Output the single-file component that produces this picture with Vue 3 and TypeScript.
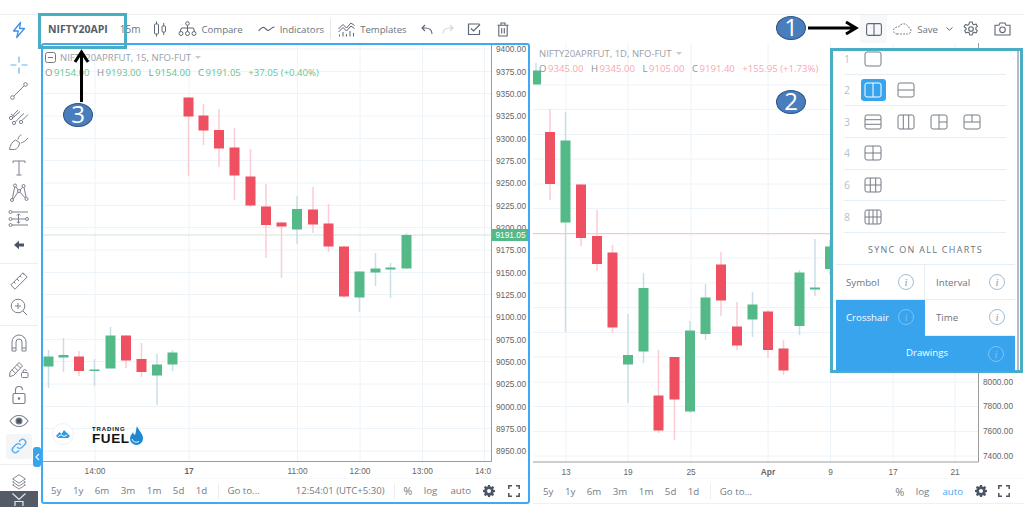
<template>
  <div class="page">
    <div class="top-gap"></div>
    <div class="body">
      <aside class="sidebar">
        <div class="tool-group first">
          <div class="bolt">
            <svg width="18" height="18" viewBox="0 0 18 18" fill="none" stroke="#3f8fe8" stroke-width="1.3" stroke-linejoin="round"><path d="M10.5 1.5 3.5 10h4.8l-1.6 6.5L14.5 7.5H9.6l.9-6Z" /></svg>
          </div>
          <div class="tool">
            <svg width="20" height="20" viewBox="0 0 20 20" fill="none" stroke="#62b5f4" stroke-width="1.2"><path d="M1.5 10H7.5M12.5 10H18.5M10 1.5V7.5M10 12.5V18.5" /></svg>
          </div>
          <div class="tool">
            <svg width="20" height="20" viewBox="0 0 20 20" fill="none" stroke="#7a818c" stroke-width="1"><circle cx="3.5" cy="16.5" r="1.8" /><circle cx="16.5" cy="3.5" r="1.8" /><path d="M4.8 15.2 15.2 4.8" /></svg>
          </div>
          <div class="tool">
            <svg width="22" height="20" viewBox="0 0 22 20" fill="none" stroke="#7a818c" stroke-width="1"><circle cx="3" cy="12" r="1.6" /><circle cx="6" cy="17" r="1.6" /><circle cx="13" cy="16" r="1.6" /><path d="M4 10.5 10 4M4.5 12 12 5.5M7.5 16 13 10l3-2.5M14 14.5 20 8.5M3 8l4 3" /></svg>
          </div>
          <div class="tool">
            <svg width="22" height="20" viewBox="0 0 22 20" fill="none" stroke="#7a818c" stroke-width="1" stroke-linejoin="round"><path d="M1.5 17.5c.5-4 2.5-8 6-9.5l4 2.5c0 3.5-2 6.5-5 7H1.5Z" /><path d="M10 7.5c.5-3 2-4.5 3.5-4.5M13 11c2-.5 4.5-2 7-5" /></svg>
          </div>
          <div class="tool">
            <svg width="18" height="18" viewBox="0 0 18 18" fill="none" stroke="#7a818c" stroke-width="1"><path d="M3 2H15M9 2V16M6.5 16H11.5M3 2V4M15 2V4" /></svg>
          </div>
          <div class="tool">
            <svg width="20" height="20" viewBox="0 0 20 20" fill="none" stroke="#7a818c" stroke-width="1"><circle cx="3" cy="17" r="1.5" /><circle cx="6" cy="2.5" r="1.5" /><circle cx="10" cy="8" r="1.5" /><circle cx="14.5" cy="3" r="1.5" /><circle cx="17.5" cy="16" r="1.5" /><path d="M3.4 15.5 5.7 4M7 4 9 6.8M11.2 7 13.6 4.2M15 4.5 17.2 14.5M4.3 16 9 9M11 9.2 16.3 15" /></svg>
          </div>
          <div class="tool">
            <svg width="22" height="20" viewBox="0 0 22 20" fill="none" stroke="#7a818c" stroke-width="1"><circle cx="2.5" cy="3" r="1.5" /><circle cx="2.5" cy="10" r="1.5" /><circle cx="19" cy="10" r="1.5" /><circle cx="2.5" cy="16" r="1.5" /><path d="M4 3H20M4 10H17.5M4 16H20M10.5 5V14M8.8 6.5 10.5 4.8 12.2 6.5M8.8 12.5 10.5 14.2 12.2 12.5" /></svg>
          </div>
          <div class="tool">
            <svg width="12" height="12" viewBox="0 0 12 12"><path d="M1 6 6 1.8V4.5H11V7.5H6V10.2Z" fill="#4b5563" /></svg>
          </div>
        </div>
        <div class="tool-group">
          <div class="tool">
            <svg width="20" height="20" viewBox="0 0 20 20" fill="none" stroke="#7a818c" stroke-width="1"><path d="M1.8 14 14 1.8 18.2 6 6 18.2ZM5 11l1.5 1.5M8 8l2 2M11 5l1.5 1.5M14 2.5l1.5 1.5" /></svg>
          </div>
          <div class="tool">
            <svg width="20" height="20" viewBox="0 0 20 20" fill="none" stroke="#7a818c" stroke-width="1"><circle cx="9" cy="9" r="6.8" /><path d="M6 9H12M9 6V12M14 14 18 18" /></svg>
          </div>
        </div>
        <div class="tool-group">
          <div class="tool">
            <svg width="18" height="20" viewBox="0 0 18 20" fill="none" stroke="#7a818c" stroke-width="1"><path d="M2 17V8a7 7 0 0 1 14 0v9H12V8a3 3 0 0 0-6 0v9ZM2 14H6M12 14H16" /></svg>
          </div>
          <div class="tool">
            <svg width="22" height="20" viewBox="0 0 22 20" fill="none" stroke="#7a818c" stroke-width="1"><path d="M2 13 11 3.5l3.5 3.5L5.5 16.5l-4 1ZM4 10.8l3.5 3.5M6.500 8.2 10 11.7M9 5.5l3.5 3.5" /><rect x="13.5" y="13.5" width="6.5" height="5" rx="1" /><path d="M15 13.5V12a1.8 1.8 0 0 1 3.5 0" /></svg>
          </div>
          <div class="tool">
            <svg width="16" height="20" viewBox="0 0 16 20" fill="none" stroke="#7a818c" stroke-width="1.1"><rect x="2" y="8.5" width="12" height="10" rx="1.2" /><path d="M4.5 8.5V5a3.5 3.5 0 0 1 7 0" /><circle cx="8" cy="13.5" r=".8" fill="#4b5563" /></svg>
          </div>
          <div class="tool">
            <svg width="20" height="14" viewBox="0 0 20 14" fill="none" stroke="#7a818c" stroke-width="1.1"><path d="M1 7c2.500-3.800 5.500-5.500 9-5.500s6.500 1.700 9 5.500c-2.500 3.800-5.500 5.500-9 5.500S3.500 10.800 1 7Z" /><circle cx="10" cy="7" r="3" fill="#4b5563" /></svg>
          </div>
          <div class="tool link-tool">
            <svg width="18" height="18" viewBox="0 0 18 18" fill="none" stroke="#55aef2" stroke-width="1.4" stroke-linecap="round"><path d="M7.5 10.5a3 3 0 0 0 4.3 0l3-3a3 3 0 0 0-4.300-4.300L9.400 4.300" /><path d="M10.5 7.5a3 3 0 0 0-4.300 0l-3 3a3 3 0 0 0 4.300 4.300l1.100-1.100" /></svg>
          </div>
        </div>
        <div class="tool-group last">
          <div class="tool">
            <svg width="16" height="17" viewBox="0 0 18 20" fill="none" stroke="#7a818c" stroke-width="1.1" stroke-linejoin="round"><path d="M9 2 16.5 7 9 12 1.5 7ZM3 9.5 1.5 10.5 9 15.5 16.5 10.5 15 9.5M3 13 1.5 14 9 19 16.5 14 15 13" /></svg>
          </div>
        </div>
        <div class="hide-tab">
          <svg width="16" height="16" viewBox="0 0 16 16" fill="none" stroke="#e5e7eb" stroke-width="1.2"><path d="M1.5 2.5 8 8.5 14.5 2.5M4 15V10.5H12V15" /></svg>
        </div>
      </aside>

      <div class="content">
        <header class="topbar">
          <span class="symbol">NIFTY20API</span>
          <span class="bar-text interval">15m</span>
          <svg class="candles-icon" width="14" height="18" viewBox="0 0 14 18" fill="none" stroke="#5f6772" stroke-width="1"><rect x="1.5" y="4" width="4" height="10" rx=".8" /><path d="M3.5 1.5V4M3.5 14V16.5" /><rect x="9" y="6" width="3.5" height="6" rx=".8" /><path d="M10.7 3V6M10.7 12V15" /></svg>
          <svg class="compare-icon" width="19" height="18" viewBox="0 0 19 18" fill="none" stroke="#5f6772" stroke-width="1"><circle cx="9.5" cy="3.5" r="1.8" /><circle cx="3" cy="13.5" r="2" /><circle cx="9.5" cy="13.5" r="2" /><circle cx="16" cy="13.5" r="2" /><path d="M9.5 5.3V8H3.5L2 11.5M9.5 8V11.5M9.5 8H15.5L16.5 11.5" /></svg>
          <span class="bar-text compare-label">Compare</span>
          <svg class="line-icon" width="17" height="12" viewBox="0 0 17 12" fill="none" stroke="#5f6772" stroke-width="1.1"><path d="M.5 8C3 5 4.5 4 6 4.5S9 8 10.5 7.5 14 4 16.5 4" /></svg>
          <span class="bar-text">Indicators</span>
          <i class="bar-sep"></i>
          <svg class="templates-icon" width="17" height="18" viewBox="0 0 17 18" fill="none" stroke="#5f6772" stroke-width="1"><path d="M.5 9 5 4.5 8.5 8 13 3l3.5 2.5M.5 12 5 7.5 8.5 11 13 6l3.5 2.5M1.5 16.5V14.5M5 16.5V12M8.5 16.5V14M12 16.5V11M15.5 16.5V13" /></svg>
          <span class="bar-text">Templates</span>
          <svg class="undo" width="12" height="11" viewBox="0 0 12 11" fill="none" stroke="#5f6772" stroke-width="1.1"><path d="M11 10C11 6 8.5 4 4 4H1M4 1 1 4l3 3" /></svg>
          <svg class="redo" width="12" height="11" viewBox="0 0 12 11" fill="none" stroke="#d2d6db" stroke-width="1.1"><path d="M1 10C1 6 3.5 4 8 4h3M8 1l3 3-3 3" /></svg>
          <svg class="check" width="14" height="14" viewBox="0 0 14 14" fill="none" stroke="#5f6772" stroke-width="1.2"><path d="M12.5 2H1.5V12.5H12.5V8M4 6.5 6.5 9 13 2.5" /></svg>
          <svg class="trash" width="12" height="15" viewBox="0 0 12 15" fill="none" stroke="#5f6772" stroke-width="1.1"><path d="M.5 3.2H11.5M4 3V1H8V3M1.8 3.2V14H10.2V3.2M4.7 6V11.5M7.3 6V11.5" /></svg>
          <div class="layout-btn">
            <svg width="16" height="13" viewBox="0 0 16 13" fill="none" stroke="#5f6772" stroke-width="1.1"><rect x=".6" y=".6" width="14.8" height="11.8" rx="1.8" /><path d="M8 .6V12.4" /></svg>
          </div>
          <svg class="cloud" width="19" height="12" viewBox="0 0 19 12" fill="none" stroke="#5f6772" stroke-width=".9" stroke-dasharray="1.8 1.3"><path d="M4 11H14.5a3.5 3.5 0 0 0 .8-6.900C14.5 2 12.5 .8 10.5 .8 8.5 .8 6.5 2 6 3.800 3 3.500 .6 5.300 .6 7.500S2 11 4 11Z" /></svg>
          <span class="bar-text save">Save</span>
          <svg class="chev" width="7" height="4" viewBox="0 0 7 4" fill="none" stroke="#5f6772" stroke-width="1"><path d="M.5 .5 3.5 3.2 6.5 .5" /></svg>
          <svg class="gear-top" width="16" height="16" viewBox="0 0 16 16" fill="none" stroke="#5f6772" stroke-width="1.1" stroke-linejoin="round"><path d="M6.7 1h2.600l.4 2 1.500.800 1.900-.700 1.300 2.300-1.500 1.300v1.600l1.500 1.300-1.300 2.300-1.900-.700-1.500.800-.4 2H6.700l-.4-2-1.500-.800-1.900.700-1.300-2.300 1.500-1.300V7.100L1.100 5.800l1.300-2.300 1.900.700 1.500-.800Z" /><circle cx="8" cy="8" r="2.3" /></svg>
          <svg class="camera" width="17" height="14" viewBox="0 0 17 14" fill="none" stroke="#5f6772" stroke-width="1.1"><path d="M1 3.2H5L6 1H11L12 3.2H16V13H1Z" /><circle cx="8.5" cy="7.8" r="2.8" /></svg>
        </header>

        <main class="charts">
          <section class="pane left-pane">
            <svg class="plot" width="485" height="434" viewBox="43 45 485 434">
              <path v-for="y in leftRows" :key="y" :d="`M43 ${y}H491`" class="grid" />
              <path v-for="x in leftCols" :key="x" :d="`M${x} 45V461`" class="grid" />
              <path d="M43 235H491" class="last-green" />
              <g v-for="c in leftCandles" :key="c[0]">
                <path :d="`M${c[0]} ${c[1]}V${c[2]}`" :class="c[5] ? 'wick-up' : 'wick-down'" />
                <rect :x="c[0] - 5" :y="c[3]" width="10" :height="c[4] - c[3]" :class="c[5] ? 'body-up' : 'body-down'" />
              </g>
              <path d="M491.5 45V461.5H43" class="axis" />
              <path d="M43 479H528" class="grid" />
              <text v-for="(p, i) in leftPrices" :key="p" x="496" :y="leftRows[i] + 3" class="tick">{{ p }}</text>
              <rect x="492" y="229" width="36" height="12" fill="#53b987" />
              <text x="495.5" y="238" class="tag">9191.05</text>
              <text v-for="t in leftTimes" :key="t.l" :x="t.x" y="474" text-anchor="middle" :class="t.b ? 'tick bold' : 'tick'">{{ t.l }}</text>
            </svg>
            <div class="legend left-legend">
              <div class="legend-title">
                <svg width="11" height="11" viewBox="0 0 11 11" fill="none" stroke="#777" stroke-width="1"><rect x=".5" y=".5" width="10" height="10" rx="2" /><path d="M3 5.5H8" /></svg>
                <span>NIFTY20APRFUT, 15, NFO-FUT</span><i class="caret"></i>
              </div>
              <div class="legend-vals up">
                <span><b>O</b>9154.00</span><span><b>H</b>9193.00</span><span><b>L</b>9154.00</span><span><b>C</b>9191.05</span><span>+37.05 (+0.40%)</span>
              </div>
            </div>
            <div class="watermark">
              <div class="cloud-badge">
                <svg width="16" height="10" viewBox="0 0 16 10"><path d="M1 7 4.5 3 6.5 5 9 1l3 3 3 3-2 2H3Z" fill="#2f9be0" /><path d="M3 7.5 6 5.800 9 7.500 12 6" stroke="#fff" fill="none" stroke-width="1" /></svg>
              </div>
              <div class="fuel">
                <span class="fuel-small">TRADING</span>
                <span class="fuel-big">FUEL</span>
              </div>
              <svg width="13" height="19" viewBox="0 0 13 19"><path d="M7 0C8 4 13 7 13 12.5A6.500 6.500 0 0 1 0 12.500C0 9.500 2 8.500 3 6 3.500 8 4 8.500 5 9 6 6 6 3 7 0Z" fill="#1e88d0" /><path d="M2 13c1 3 4 4 7 2.500" stroke="#fff" fill="none" stroke-width="1" /></svg>
            </div>
            <footer class="range-bar">
              <span v-for="r in ranges" :key="r">{{ r }}</span>
              <i class="range-sep"></i>
              <span class="goto">Go to...</span>
              <span class="clock">12:54:01 (UTC+5:30)</span>
              <i class="range-sep"></i>
              <span class="pct">%</span>
              <span>log</span>
              <span class="auto">auto</span>
              <svg class="gear" width="12" height="12" viewBox="0 0 12 12"><path fill-rule="evenodd" fill="#4b5563" d="M5 0h2l.3 1.600 1 .4L9.700 1.100l1.400 1.400-.9 1.400.4 1L12 5v2l-1.400.300-.4 1 .9 1.400-1.400 1.400-1.400-.9-1 .4L7 12H5l-.3-1.400-1-.4-1.400.9L.9 9.700l.9-1.400-.4-1L0 7V5l1.400-.300.4-1-.9-1.400L2.300 .9l1.400.9 1-.4ZM6 4a2 2 0 1 0 0 4 2 2 0 0 0 0-4Z" /></svg>
              <svg class="expand" width="12" height="12" viewBox="0 0 12 12" fill="none" stroke="#4b5563" stroke-width="1.5"><path d="M.8 4V.8H4M8 .8h3.200V4M11.200 8v3.200H8M4 11.200H.8V8" /></svg>
            </footer>
          </section>

          <section class="pane right-pane">
            <svg class="plot" width="491" height="436" viewBox="533 43 491 436">
              <path v-for="y in rightRows" :key="y" :d="`M533 ${y}H978`" class="grid" />
              <path v-for="x in rightCols" :key="x" :d="`M${x} 43V462`" class="grid" />
              <path d="M533 233.7H978" class="last-red" />
              <g v-for="c in rightCandles" :key="c[0]">
                <path :d="`M${c[0]} ${c[1]}V${c[2]}`" :class="c[5] ? 'wick-up' : 'wick-down'" />
                <rect :x="c[0] - 5" :y="c[3]" width="10" :height="c[4] - c[3]" :class="c[5] ? 'body-up' : 'body-down'" />
              </g>
              <path d="M978.5 43V462H533" class="axis" />
              <text v-for="p in rightPrices" :key="p.l" x="983" :y="p.y + 3" class="tick">{{ p.l }}</text>
              <text v-for="t in rightTimes" :key="t.l" :x="t.x" y="475" text-anchor="middle" :class="t.b ? 'tick bold' : 'tick'">{{ t.l }}</text>
              <path d="M533 479H1024" class="grid" />
            </svg>
            <div class="legend right-legend">
              <div class="legend-title"><span>NIFTY20APRFUT, 1D, NFO-FUT</span><i class="caret"></i></div>
              <div class="legend-vals down">
                <span><b>O</b>9345.00</span><span><b>H</b>9345.00</span><span><b>L</b>9105.00</span><span><b>C</b>9191.40</span><span>+155.95 (+1.73%)</span>
              </div>
            </div>
            <footer class="range-bar">
              <span v-for="r in ranges" :key="r">{{ r }}</span>
              <i class="range-sep"></i>
              <span class="goto">Go to...</span>
              <span class="pct push">%</span>
              <span>log</span>
              <span class="auto on">auto</span>
              <svg class="gear" width="12" height="12" viewBox="0 0 12 12"><path fill-rule="evenodd" fill="#4b5563" d="M5 0h2l.3 1.600 1 .4L9.700 1.100l1.400 1.400-.9 1.400.4 1L12 5v2l-1.400.300-.4 1 .9 1.400-1.400 1.400-1.400-.9-1 .4L7 12H5l-.3-1.400-1-.4-1.400.9L.9 9.700l.9-1.400-.4-1L0 7V5l1.400-.300.4-1-.9-1.400L2.300 .9l1.400.9 1-.4ZM6 4a2 2 0 1 0 0 4 2 2 0 0 0 0-4Z" /></svg>
              <svg class="expand" width="12" height="12" viewBox="0 0 12 12" fill="none" stroke="#4b5563" stroke-width="1.5"><path d="M.8 4V.8H4M8 .8h3.200V4M11.200 8v3.200H8M4 11.200H.8V8" /></svg>
            </footer>
          </section>
        </main>
      </div>
    </div>

    <div class="handle">
      <svg width="5" height="8" viewBox="0 0 5 8" fill="none" stroke="#fff" stroke-width="1.1"><path d="M4 1 1 4l3 3" /></svg>
    </div>

    <div class="layout-menu">
      <div v-for="row in layoutRows" :key="row.n" class="layout-row">
        <span class="row-num">{{ row.n }}</span>
        <span v-for="(d, i) in row.icons" :key="i" :class="['layout-icon', { active: row.n === 2 && i === 0 }]">
          <svg width="18" height="16" viewBox="0 0 18 16" fill="none" stroke="currentColor" stroke-width="1"><rect x="1" y="1" width="16" height="14" rx="2" /><path :d="d" /></svg>
        </span>
      </div>
      <div class="sync-title">SYNC ON ALL CHARTS</div>
      <div class="sync-grid">
        <div v-for="s in syncItems" :key="s.label" :class="['sync-cell', { on: s.on, wide: s.wide }]">
          <span class="sync-label">{{ s.label }}</span>
          <span class="info">i</span>
        </div>
      </div>
    </div>

    <div class="callout symbol-box"></div>
    <svg class="arrows" width="1024" height="507" viewBox="0 0 1024 507" fill="none" stroke="#000" stroke-width="3">
      <path d="M808 28H855M846 22 856 28 846 34" />
      <path d="M81.5 102V54M75 62 81.5 52 88 62" />
    </svg>
    <div class="badge b1">1</div>
    <div class="badge b2">2</div>
    <div class="badge b3">3</div>
  </div>
</template>

<script setup lang="ts">
// x, wick top, wick bottom, body top, body bottom, rising
type Candle = [number, number, number, number, number, boolean];

const leftCandles: Candle[] = [
  [48.5, 350, 388, 356.5, 366.5, true],
  [63.5, 338, 372, 355, 357.5, true],
  [79, 351, 376, 356.5, 371, false],
  [94.5, 359, 386, 369.5, 371, true],
  [110.5, 327, 368, 335.5, 368.5, true],
  [126, 335, 368, 335.5, 360.5, false],
  [141.5, 343, 377, 359, 372, false],
  [157, 354, 405, 364.5, 375.5, true],
  [172.5, 350, 371, 352.5, 364.5, true],
  [188.5, 97, 176, 97.5, 116.5, false],
  [203.5, 104, 145, 115.5, 130.5, false],
  [219, 109, 167, 130, 148.5, false],
  [234.5, 128, 200, 147.5, 175.5, false],
  [250.5, 149, 207, 176.5, 205.5, false],
  [266, 184, 258, 206.5, 225, false],
  [281.5, 222, 278, 222.5, 226.5, false],
  [297, 196, 244, 209, 229.5, true],
  [313, 187, 233, 209.5, 224.5, false],
  [328.5, 204, 252, 223.5, 246.5, false],
  [344, 246, 298, 246.5, 296.5, false],
  [359.5, 271, 312, 271.5, 297.5, true],
  [375.5, 253, 286, 268.5, 272.5, true],
  [390.5, 263, 298, 267.5, 269.5, true],
  [406.5, 233, 269, 235, 268.5, true],
];

const rightCandles: Candle[] = [
  [536, 63, 84, 70.5, 84.5, true],
  [550, 109, 200, 132, 184, false],
  [565.5, 112, 332, 140.5, 222.5, true],
  [581, 184, 246, 184.5, 238, false],
  [597, 210, 271, 236, 264, false],
  [612.5, 245, 333, 252.5, 327.5, false],
  [628, 314, 403, 355, 364.5, true],
  [643.5, 273, 363, 288, 351.5, true],
  [658.5, 350, 433, 395.5, 430.5, false],
  [674.5, 357, 440, 357, 399.5, false],
  [690, 321, 413, 330.5, 411.5, true],
  [705.5, 284, 340, 297.5, 334, true],
  [721, 252, 316, 264.5, 300.5, false],
  [737, 302, 350, 326.5, 345.5, false],
  [752.5, 292, 337, 304.5, 319.5, true],
  [768, 310, 358, 311.5, 350, false],
  [783.5, 340, 375, 348.5, 370.5, false],
  [799.5, 270, 335, 272.5, 326, true],
  [815, 239, 296, 287.5, 289.5, true],
  [830, 240, 275, 246.5, 269, true],
];

const leftPrices: string[] = [];
const leftRows: number[] = [];
for (let i = 0; i <= 18; i++) {
  leftPrices.push((9400 - i * 25).toFixed(2));
  leftRows.push(Math.round((49 + i * 22.33) * 2) / 2);
}
const leftCols = [95, 189, 297.5, 360, 422.5, 484.5];
const leftTimes = [
  { l: "14:00", x: 95, b: false },
  { l: "17", x: 189, b: true },
  { l: "11:00", x: 297.5, b: false },
  { l: "12:00", x: 360, b: false },
  { l: "13:00", x: 422.5, b: false },
  { l: "14:0", x: 483, b: false },
];

const rightRows: number[] = [];
for (let i = 0; i <= 15; i++) rightRows.push(Math.round((84.75 + i * 24.75) * 2) / 2);
const rightCols = [566, 628, 691, 768, 830.5, 893, 955];
const rightTimes = [
  { l: "13", x: 566, b: false },
  { l: "19", x: 628, b: false },
  { l: "25", x: 691, b: false },
  { l: "Apr", x: 768, b: true },
  { l: "9", x: 830.5, b: false },
  { l: "17", x: 893, b: false },
  { l: "21", x: 955, b: false },
];
const rightPrices = [
  { l: "8000.00", y: 381.5 },
  { l: "7800.00", y: 406 },
  { l: "7600.00", y: 430.5 },
  { l: "7400.00", y: 456 },
];

const ranges = ["5y", "1y", "6m", "3m", "1m", "5d", "1d"];

const layoutRows = [
  { n: 1, icons: [""] },
  { n: 2, icons: ["M9 1V15", "M1 8H17"] },
  { n: 3, icons: ["M1 5.7H17M1 10.3H17", "M6.3 1V15M11.7 1V15", "M9 1V15M9 8H17", "M1 8H17M9 1V8"] },
  { n: 4, icons: ["M9 1V15M1 8H17"] },
  { n: 6, icons: ["M6.3 1V15M11.7 1V15M1 8H17"] },
  { n: 8, icons: ["M5 1V15M9 1V15M13 1V15M1 8H17"] },
];

const syncItems = [
  { label: "Symbol", on: false, wide: false },
  { label: "Interval", on: false, wide: false },
  { label: "Crosshair", on: true, wide: false },
  { label: "Time", on: false, wide: false },
  { label: "Drawings", on: true, wide: true },
];
</script>

<style>
html,
body {
  margin: 0;
  background: #fff;
}
</style>

<style scoped>
.page {
  position: relative;
  width: 1024px;
  height: 507px;
  overflow: hidden;
  background: #fff;
  font-family: "Open Sans", "Liberation Sans", sans-serif;
  color: #6b7480;
}
.top-gap {
  height: 14px;
  border-bottom: 1px solid #eceef1;
}
.body {
  display: flex;
  height: 492px;
}
.sidebar {
  position: relative;
  width: 38px;
  flex: none;
}
.tool-group {
  padding: 5px 0;
  border-top: 1px solid #eceef1;
}
.tool-group.first {
  padding: 0 0 5px;
  border-top: 0;
}
.tool-group.last {
  padding-top: 3px;
}
.bolt {
  height: 37px;
  display: flex;
  align-items: flex-start;
  justify-content: center;
  padding-top: 6px;
  box-sizing: border-box;
}
.tool {
  height: 25.7px;
  display: flex;
  align-items: center;
  justify-content: center;
}
.link-tool {
  margin: 0 6px;
  background: #f3f5f7;
  border-radius: 3px;
}
.hide-tab {
  position: absolute;
  left: 0;
  bottom: 0;
  width: 38px;
  height: 16px;
  background: #555b66;
  display: flex;
  justify-content: center;
}
.content {
  flex: 1;
  min-width: 0;
}
.topbar {
  height: 28px;
  display: flex;
  align-items: center;
  font-size: 9.6px;
  white-space: nowrap;
}
.symbol {
  margin-left: 10px;
  font-size: 10.5px;
  font-weight: 700;
  color: #555d68;
}
.bar-text {
  margin-left: 5px;
}
.interval {
  margin-left: 12px;
  font-size: 10px;
}
.candles-icon {
  margin-left: 13px;
}
.compare-icon {
  margin-left: 11px;
}
.compare-label {
  margin-left: 4px;
}
.line-icon {
  margin-left: 15px;
}
.bar-sep {
  width: 1px;
  height: 20px;
  background: #e6e8eb;
  margin: 0 7px 0 6px;
}
.undo {
  margin-left: 14px;
}
.redo {
  margin-left: 9px;
}
.check {
  margin-left: 13px;
}
.trash {
  margin-left: 16px;
}
.layout-btn {
  margin-left: auto;
  width: 27px;
  height: 28px;
  background: #f7f8fa;
  display: flex;
  align-items: center;
  justify-content: center;
}
.cloud {
  margin-left: 6px;
}
.chev {
  margin-left: 8px;
}
.gear-top {
  margin-left: 10px;
}
.camera {
  margin: 0 13px 0 15px;
}
.charts {
  display: flex;
  height: 461px;
  padding-left: 3px;
}
.pane {
  position: relative;
  box-sizing: border-box;
  height: 461px;
  flex: none;
}
.left-pane {
  width: 489px;
  border: 2px solid #3fa9f5;
  border-radius: 3px;
}
.right-pane {
  width: 491px;
  margin-left: 3px;
  border-bottom: 1px solid #eef1f4;
}
.plot {
  display: block;
}
.grid {
  stroke: #edf4f9;
  stroke-width: 1;
  fill: none;
}
.axis {
  stroke: #9b9b9b;
  stroke-width: 1;
  fill: none;
}
.last-green {
  stroke: #b5e3cc;
  stroke-dasharray: 1.5 0.5;
}
.last-red {
  stroke: #f9c6cd;
  stroke-width: 1.2;
}
.wick-up {
  stroke: #c8e0e5;
  stroke-width: 1.5;
}
.wick-down {
  stroke: #fbccd3;
  stroke-width: 1.5;
}
.body-up {
  fill: #53b987;
}
.body-down {
  fill: #ee4f61;
}
.tick {
  font-family: "Liberation Sans", sans-serif;
  font-size: 8.3px;
  fill: #666;
}
.tick.bold {
  font-weight: 700;
}
.tag {
  font-family: "Liberation Sans", sans-serif;
  font-size: 8.3px;
  fill: #fff;
}
.legend {
  position: absolute;
  font-size: 9.5px;
  color: #9aa0a8;
}
.left-legend {
  left: 2px;
  top: 5px;
}
.right-legend {
  left: 6px;
  top: 3px;
}
.legend-title {
  display: flex;
  align-items: center;
  gap: 4px;
  height: 15px;
  white-space: nowrap;
}
.caret {
  width: 0;
  height: 0;
  border: 3px solid transparent;
  border-top: 3px solid #c5c9ce;
  margin-top: 3px;
}
.legend-vals {
  display: flex;
  gap: 7.5px;
  height: 15px;
  align-items: center;
  white-space: nowrap;
  font-size: 9.6px;
}
.legend-vals b {
  font-weight: 400;
  color: #8d939b;
  margin-right: 1.5px;
}
.legend-vals.up {
  color: #65c596;
}
.legend-vals.down {
  color: #f9a8b2;
}
.watermark {
  position: absolute;
  left: 9px;
  top: 376px;
  display: flex;
  align-items: flex-end;
  height: 24px;
}
.cloud-badge {
  width: 22px;
  height: 22px;
  box-sizing: border-box;
  border-radius: 50%;
  background: #fff;
  border: 1px solid #eef2f5;
  display: flex;
  align-items: center;
  justify-content: center;
  margin-right: 18px;
}
.fuel {
  display: flex;
  flex-direction: column;
  color: #111;
  font-family: "Liberation Sans", sans-serif;
  font-weight: 700;
  line-height: 1;
}
.fuel-small {
  font-size: 6px;
  letter-spacing: 0.9px;
  line-height: 7px;
}
.fuel-big {
  font-size: 13.5px;
  letter-spacing: 0.6px;
  line-height: 12px;
}
.range-bar {
  display: flex;
  align-items: center;
  height: 23px;
  padding-left: 8px;
  gap: 11.5px;
  font-size: 9.7px;
  white-space: nowrap;
  color: #727b87;
}
.right-pane .range-bar {
  height: 24px;
  padding-left: 10px;
}
.range-sep {
  width: 1px;
  height: 16px;
  background: #eceef1;
  margin-left: -1px;
}
.goto {
  margin-left: -2.5px;
}
.clock {
  margin-left: 24.5px;
  font-size: 9.6px;
}
.clock + .range-sep {
  margin-left: -2.5px;
}
.pct {
  font-size: 11px;
  margin-left: -2.5px;
}
.push {
  margin-left: auto;
}
.auto {
  margin-left: 1.5px;
}
.on {
  color: #45aaf2;
}
.gear {
  flex: none;
}
.expand {
  flex: none;
  margin-left: 2px;
  margin-right: 8px;
}
.right-pane .expand {
  margin-left: 0;
  margin-right: 14px;
}
.handle {
  position: absolute;
  left: 33px;
  top: 447px;
  width: 8px;
  height: 20px;
  border-radius: 3px;
  background: #38a4ee;
  display: flex;
  align-items: center;
  justify-content: center;
}
.layout-menu {
  position: absolute;
  left: 830px;
  top: 48px;
  width: 193px;
  height: 325px;
  box-sizing: border-box;
  border: 3px solid #4bacc6;
  background: #fff;
  padding: 0 5px 0 3px;
}
.layout-menu::after {
  content: "";
  position: absolute;
  right: 1px;
  top: 0;
  bottom: 0;
  width: 2px;
  background: #b4bbc2;
}
.layout-row {
  display: flex;
  align-items: center;
  height: 31.7px;
  box-sizing: border-box;
  margin: 0 9px 0 8px;
  border-bottom: 1px solid #e6eff5;
  gap: 15px;
}
.layout-row:first-child {
  height: 23.5px;
  padding-bottom: 7px;
}
.row-num {
  width: 5px;
  font-size: 10.5px;
  color: #b4c2d0;
}
.layout-icon {
  display: flex;
  color: #757c87;
}
.layout-icon.active {
  color: #fff;
  background: #38a4ee;
  border-radius: 3px;
  padding: 3px 3.5px;
  margin: 0 -3.5px;
}
.sync-title {
  height: 32px;
  box-sizing: border-box;
  border-bottom: 1px solid #e6eff5;
  text-align: center;
  font-size: 9px;
  line-height: 33px;
  letter-spacing: 1.3px;
  color: #6b7480;
}
.sync-grid {
  display: grid;
  grid-template-columns: 89px 90px;
  grid-auto-rows: 35.3px;
}
.sync-cell {
  display: flex;
  align-items: center;
  justify-content: space-between;
  box-sizing: border-box;
  padding: 0 10px;
  font-size: 9.7px;
  border-bottom: 1px solid #e6eff5;
  border-right: 1px solid #e6eff5;
}
.sync-cell:nth-child(even) {
  border-right: 0;
  padding-left: 11px;
}
.sync-cell.on {
  background: #38a4ee;
  color: #fff;
  border-color: #38a4ee;
}
.sync-cell.wide {
  grid-column: 1 / 3;
  position: relative;
  justify-content: center;
  padding-left: 14px;
}
.info {
  width: 16px;
  height: 16px;
  box-sizing: border-box;
  border: 1px solid #a3bdd0;
  border-radius: 50%;
  display: flex;
  align-items: center;
  justify-content: center;
  font-family: "Liberation Serif", serif;
  font-style: italic;
  font-size: 11px;
  color: #7d9db5;
}
.sync-cell.on .info {
  border-color: #7cc2f2;
  color: #7cc2f2;
}
.sync-cell.wide .info {
  position: absolute;
  right: 10px;
  top: 10px;
}
.callout {
  position: absolute;
  box-sizing: border-box;
  border: 3px solid #4bacc6;
}
.symbol-box {
  left: 38px;
  top: 13px;
  width: 89px;
  height: 36px;
}
.arrows {
  position: absolute;
  left: 0;
  top: 0;
  pointer-events: none;
}
.badge {
  position: absolute;
  width: 30px;
  height: 24px;
  box-sizing: border-box;
  border: 1.5px solid #2f5486;
  border-radius: 50%;
  background: #4a7dbb;
  color: #fff;
  font-family: "Open Sans", sans-serif;
  font-size: 24px;
  line-height: 20px;
  text-align: center;
}
.b1 {
  left: 776px;
  top: 16px;
}
.b2 {
  left: 776px;
  top: 90px;
}
.b3 {
  left: 63px;
  top: 103px;
}
</style>
